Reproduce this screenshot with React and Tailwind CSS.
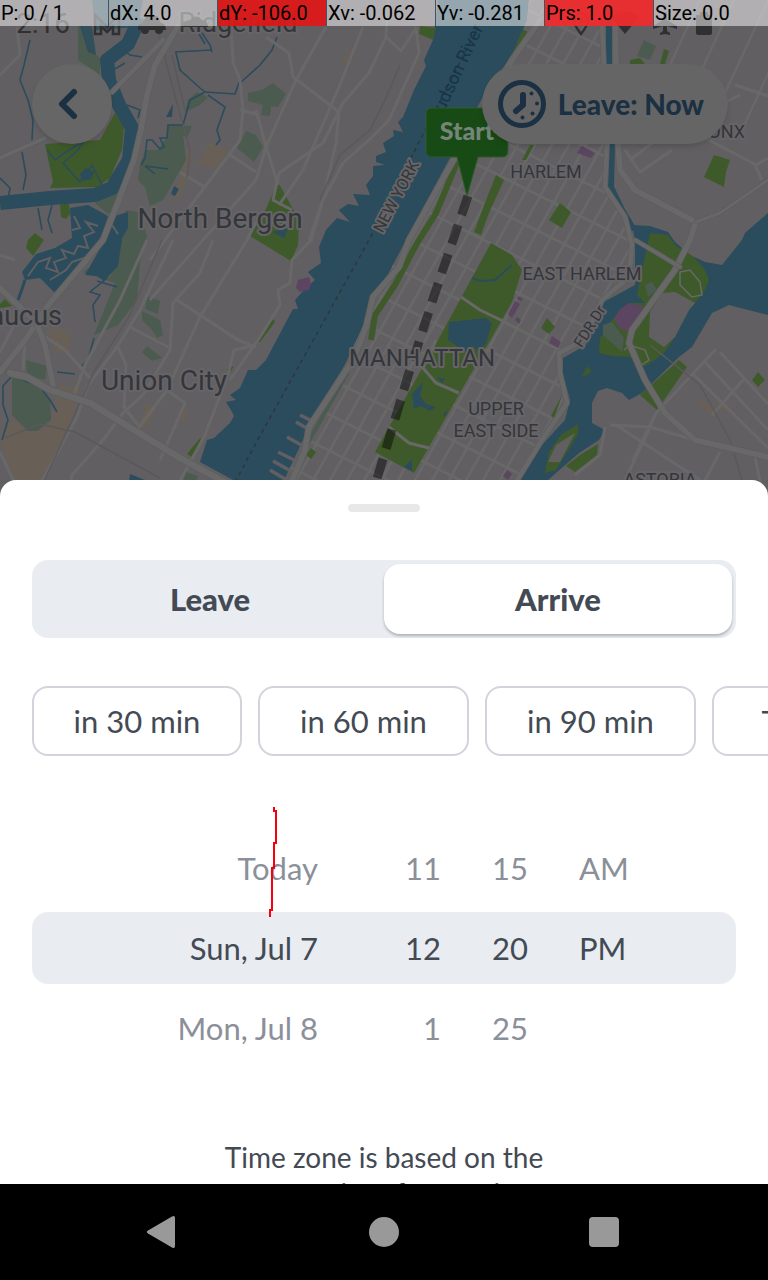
import React, { useState } from "react";

const LAND = "#625f62";
const WATER = "#2a4c5c";
const PARK = "#3f5a2a";
const MARSH = "#4b5b50";
const ROAD = "#696869";
const SAND = "#686056";
const PURPLE = "#5b4560";

const MANHATTAN =
  "M529 0 L527 20 L512 55 L483 97 L449 160 L406 240 L376 297 L346 363 L303 440 L275 500 L505 500 L542 440 L567 403 L560 373 L559 353 L584 340 L602 300 L632 277 L632 240 L607 190 L607 0 Z";

const avenues = Array.from({ length: 26 }, (_, i) => 420 + i * 17);
const streets = Array.from({ length: 20 }, (_, i) => -160 + i * 36);
const bronx = Array.from({ length: 7 }, (_, i) => i * 34);

const waterShapes = [
  "M438 0 L433 40 L424 60 L426 66 L414 90 L403 117 L398 122 L403 132 L393 130 L394 136 L383 143 L386 152 L376 156 L376 162 L385 165 L373 166 L373 176 L366 185 L370 195 L353 194 L359 206 L348 204 L339 210 L350 222 L337 218 L326 230 L319 247 L321 263 L308 272 L315 280 L306 288 L295 300 L298 309 L293 309 L266 360 L256 370 L248 370 L240 388 L230 395 L236 400 L226 402 L231 410 L234 416 L230 423 L214 438 L207 440 L200 462 L233 480 L240 500 L275 500 L303 440 L323 400 L346 363 L359 337 L376 297 L403 257 L406 240 L449 160 L483 97 L512 55 L519 43 L527 20 L529 0 Z",
  "M635 240 L635 285 L602 303 L586 345 L563 358 L563 375 L570 400 L565 420 L540 447 L505 500 L532 500 L548 480 L579 453 L599 440 L605 430 L592 423 L592 403 L598 391 L607 388 L622 393 L629 400 L642 393 L679 357 L692 347 L712 313 L729 305 L768 315 L768 213 L745 233 L742 240 L722 265 L705 262 L690 255 L675 242 L668 232 L650 226 L632 225 Z",
];

const parks = [
  "M491 243 L512 255 L522 270 L512 302 L503 318 L414 473 L375 452 L438 340 Z",
  "M45 144 L100 140 L115 113 L124 126 L122 150 L110 178 L98 187 L50 188 L53 182 Z",
  "M496 175 L504 180 L489 213 L481 235 L474 232 L486 200 Z",
  "M560 203 L571 212 L562 228 L549 220 Z",
  "M714 155 L730 160 L726 172 L724 187 L704 177 Z",
  "M547 318 L555 327 L549 334 L541 328 Z",
  "M758 372 L765 380 L758 387 L752 380 Z",
  "M679 360 L687 367 L657 410 L640 395 Z",
  "M278 182 L299 220 L298 245 L291 261 L250 236 L264 213 Z",
  "M60 204 L69 204 L70 214 L66 219 L61 217 Z",
  "M28 240 L35 233 L44 240 L33 256 L26 248 Z",
  "M420 26 L436 28 L433 40 L419 34 Z",
  "M0 304 L5 299 L12 306 L0 308 Z",
  "M200 438 L203 441 L192 457 L187 454 Z",
  "M227 369 L234 366 L228 376 Z",
  "M273 319 L275 322 L260 342 L255 342 Z",
  "M311 448 L316 452 L311 459 L306 455 Z",
  "M562 395 L559 404 L554 418 L551 416 Z",
  "M664 49 L669 51 L665 64 L660 64 Z",
  "M630 60 L640 58 L645 64 L630 64 Z",
  "M530 145 L534 145 L526 160 L522 160 Z",
];

const marshes = [
  "M168 125 L192 126 L187 138 L183 135 L186 160 L163 200 L150 206 L145 187 L138 180 L140 165 L145 150 L158 150 L166 138 Z",
  "M78 26 L82 26 L88 48 L100 58 L100 75 L78 60 Z",
  "M132 163 L128 185 L120 205 L108 214 L95 203 L115 190 Z",
  "M125 210 L138 212 L147 235 L140 262 L137 300 L118 325 L94 335 L115 283 L83 272 L88 268 L110 277 L120 255 L118 242 L128 228 Z",
  "M185 112 L188 100 L197 92 L208 97 L200 105 Z",
  "M248 93 L262 90 L273 83 L286 94 L278 107 L271 106 L270 116 L261 115 L263 105 L248 101 Z",
  "M237 148 L246 131 L256 135 L263 147 L254 162 Z",
  "M12 376 L35 384 L50 400 L51 420 L37 431 L28 431 L12 415 Z",
  "M26 360 L47 366 L45 380 L27 375 Z",
  "M147 296 L160 301 L158 314 L145 309 Z",
  "M142 311 L160 320 L163 335 L157 338 L152 330 L142 320 Z",
  "M147 346 L162 358 L152 361 L142 352 Z",
  "M644 40 L656 46 L650 60 L637 56 Z",
  "M534 26 L546 30 L544 37 L534 33 Z",
  "M550 33 L560 38 L557 45 L548 41 Z",
  "M595 284 L608 289 L600 297 L591 292 Z",
  "M186 472 L198 476 L192 490 L180 490 Z",
];

const sands = [
  "M210 142 L228 150 L218 168 L196 165 Z",
  "M48 331 L62 328 L71 338 L69 355 L55 352 Z",
  "M12 418 L28 431 L40 431 L52 420 L58 385 L80 388 L70 430 L40 490 L18 490 L0 440 Z",
  "M342 60 L355 45 L356 54 L344 68 Z",
  "M146 405 L157 404 L150 425 L138 430 Z",
  "M180 408 L188 412 L184 422 L177 420 Z",
  "M355 415 L367 422 L361 434 L350 428 Z",
  "M697 397 L715 408 L712 415 L698 404 Z",
  "M715 400 L730 405 L722 413 Z",
  "M190 145 L193 150 L183 190 L172 205 L185 160 Z",
];

const streams = [
  "M30 40 L24 65 L20 80 L28 100 L33 120 L32 140",
  "M22 152 L26 175 L23 190",
  "M0 178 L10 188 L8 200",
  "M175 52 L212 50 M176 53 L180 70 L200 88 L205 92",
  "M205 92 L190 100 L183 125",
  "M208 95 L225 107 L217 130 L220 140 L216 145",
  "M240 80 L235 94 L205 92",
  "M183 125 L168 125 L167 138 L160 138 L164 147 L160 149 L152 140 L147 140 L145 158 L141 165",
  "M145 166 L155 174 M145 166 L168 169",
  "M47 150 L55 160 L66 152 L84 141 L78 150 L63 163 L80 182 L86 174 L92 165 L102 185",
  "M38 208 L42 230 M52 205 L48 220 L52 233",
  "M108 73 L125 63 M118 46 L130 55 L142 57 M127 105 L140 110 L138 118",
  "M12 376 L3 386 L3 405 L8 420 L2 440 M13 376 L40 387 L50 400 L57 412",
  "M94 338 L88 360 L82 366 M57 372 L75 374",
  "M107 278 L90 292 L100 295 L93 305 L95 322 M97 281 L117 287",
  "M240 83 L260 65 L272 50 L277 37",
  "M200 30 L210 45 L212 52 M198 32 L205 44",
];

const mainRoads = [
  ["M178 26 L155 65 L147 95 L141 130 L134 160 L120 197 L103 240 L50 303 L25 340 L0 372", 7],
  ["M163 40 L112 92", 6],
  ["M0 158 L45 138", 5],
  ["M0 288 L36 322 L45 345 L53 385", 7],
  ["M10 373 L27 377 L50 390 L90 403 L180 458 L250 496", 8],
  ["M540 20 L512 60 L449 168 L409 240 L399 267 L373 297 L366 327 L353 360 L309 427 L305 450 L284 500", 7],
  ["M696 222 L690 240 L675 270 L632 330 L629 343 L645 380 L665 413 L695 440 L768 457", 7],
  ["M635 240 L662 256 L680 267", 5],
  ["M615 0 L617 130 L620 170 L635 190 L692 220", 7],
  ["M696 222 L720 213 L768 180", 4],
  ["M602 20 L607 143 L605 187 L625 217 L632 245 L629 277 L602 300 L584 340 L559 353 L560 373 L567 403 L542 440 L505 500", 6],
];

const roads = [
  "M147 240 L120 300 L85 365 L72 400 M173 240 L140 310 L117 347 L87 387 L77 417 L37 490",
  "M213 240 L200 273 L173 303 L170 350 L143 395 L123 413 L103 440 L72 475 L70 490",
  "M256 222 L247 240 L200 317 L167 390 L137 430",
  "M177 300 L238 340 L256 347 M130 327 L170 348",
  "M118 347 L126 365 L124 407 L138 425",
  "M167 390 L185 403 L160 460",
  "M256 345 L234 350 L228 375 L205 435 L175 490",
  "M326 27 L296 80 L266 147 L256 180 L150 300",
  "M363 27 L339 87 L303 170 L279 205",
  "M388 0 L386 37 L369 73 L343 103 L323 143 L279 173 L273 200 L292 210",
  "M266 37 L289 53 L293 77 L339 112 L336 143 L323 200 L309 240",
  "M386 37 L401 51 L416 28 L419 53 L389 120 L369 140 L343 163 L323 200 L311 240 L292 260 L290 283 L278 290 L280 305 L260 337 L230 380",
  "M231 26 L233 62 L240 80 L243 110 L240 140 L150 260",
  "M0 75 L20 55 L17 27 M240 110 L256 114",
  "M256 110 L267 150 L278 185 M180 172 L206 188 M230 155 L256 172",
  "M35 330 L65 350 L90 378 M25 340 L23 370 M0 352 L14 325",
  "M0 255 L15 260 M0 452 L18 490",
  "M716 349 L656 413 L633 460 M720 352 L768 404 M705 362 L768 430 M693 374 L768 448",
  "M745 378 L712 415 M610 425 L650 427 L695 440",
  "M605 427 L600 455 L575 475 M616 425 L700 480 M650 428 L620 490",
  "M755 457 L762 490 M720 452 L700 490",
  "M630 160 L672 128 L740 95 M630 75 L700 140 M735 85 L768 96",
  "M625 150 L640 172 L672 150 M690 130 L756 165 L768 158 M755 165 L762 180",
];

function MapLabel({ x, y, size, rotate, anchor = "middle", children }) {
  return (
    <text
      x={x}
      y={y}
      fontSize={size}
      textAnchor={anchor}
      transform={rotate ? `rotate(${rotate} ${x} ${y})` : undefined}
      fill="#33363b"
      stroke="#666466"
      strokeWidth="4"
      strokeLinejoin="round"
      paintOrder="stroke"
    >
      {children}
    </text>
  );
}

function CityMap() {
  return (
    <svg
      className="absolute inset-0 h-full w-full font-[Roboto,sans-serif]"
      viewBox="0 0 768 500"
      preserveAspectRatio="xMidYMin slice"
      aria-label="Map of Manhattan"
    >
      <defs>
        <clipPath id="island">
          <path d={MANHATTAN} />
        </clipPath>
      </defs>
      <rect width="768" height="500" fill={LAND} />
      {sands.map((d) => <path key={d} d={d} fill={SAND} />)}
      {marshes.map((d) => <path key={d} d={d} fill={MARSH} />)}

      <g stroke={ROAD} strokeWidth="2.4" fill="none">
        {bronx.map((v) => (
          <path key={v} d={`M${640 + v} 130 L${700 + v} 0`} />
        ))}
      </g>

      {waterShapes.map((d) => <path key={d} d={d} fill={WATER} />)}

      <g clipPath="url(#island)" fill="none">
        <rect width="768" height="500" fill={LAND} />
        <g stroke={ROAD} strokeWidth="2.6">
          {avenues.map((x) => <path key={x} d={`M${x + 60} 0 L${x - 220} 500`} />)}
          {streets.map((y) => <path key={y} d={`M260 ${y} L660 ${y + 200}`} />)}
        </g>
        <path d="M458 160 L436 213 L416 245 L395 285 L375 315 L371 340" stroke={PARK} strokeWidth="6" />
        <path d="M484 95 L497 67 L513 54 L524 30" stroke={PARK} strokeWidth="8" />
        <path d="M348 372 L332 400 L304 450" stroke={MARSH} strokeWidth="4" />
      </g>

      {parks.map((d) => <path key={d} d={d} fill={PARK} />)}

      <path
        d="M650 233 L641 275 L637 295 L645 303 L629 303 L612 320 L600 338 L599 353 L612 356 L630 357 L640 366 L646 366 L664 353 L675 337 L689 310 L695 303 L705 290 L709 280 L705 270 L694 257 L675 245 L668 235 Z"
        fill={PARK}
      />
      <path d="M662 293 L675 292 L695 303 L689 310 L675 337 L664 347 L649 337 L650 312 Z" fill={LAND} />
      <path d="M603 325 L612 322 L624 338 L622 352 L603 335 Z" fill={MARSH} />
      <path d="M645 285 L652 282 L657 290 L648 297 Z" fill={MARSH} />
      <path d="M680 272 L690 270 L700 282 L702 295 L692 297 L680 285 Z M624 350 L630 345 L645 350 L649 360 L640 366" fill="none" stroke={ROAD} strokeWidth="1.5" />
      <path d="M578 424 L578 434 L556 470 L545 473 L549 452 L562 434 Z" fill={PARK} />
      <path d="M575 433 L560 462 L548 462 L556 445 Z" fill={LAND} />
      <path d="M598 444 L597 455 L575 472 L566 466 L580 455 Z" fill={PARK} />
      <path d="M587 366 L591 371 L589 374 L582 377 Z" fill={PARK} />

      <g fill={PURPLE}>
        <path d="M614 318 L620 309 L629 303 L644 306 L629 332 L620 329 Z" />
        <path d="M298 280 L309 277 L311 284 L309 290 L300 292 L296 288 Z" />
        <path d="M582 146 L595 153 L591 158 L577 153 Z" />
        <path d="M515 301 L520 304 L512 318 L508 314 Z" />
        <path d="M518 296 L523 299 L521 301 L517 299 Z M517 317 L521 320 L519 324 L515 320 Z" />
        <path d="M552 336 L561 342 L558 348 L549 343 Z M507 470 L512 474 L508 480 L503 476 Z" />
      </g>

      <path d="M140 18 L128 44 L107 60 L109 80 L119 105 L132 128 L129 160 L112 188 L95 195 L50 198 L0 203" fill="none" stroke={WATER} strokeWidth="14" strokeLinejoin="round" />
      <path d="M92 0 L143 0 L138 27 L96 30 Z M80 26 L92 26 L96 55 L88 52 Z" fill={WATER} opacity="0.85" />
      <path d="M70 208 L88 205 L108 216 L101 238 L70 276 L55 293 L40 278 L25 280 L22 272 L36 254 L55 248 L72 238 Z" fill={WATER} />
      <path d="M85 275 L105 240 L122 240 L118 266 L104 281 L97 276 Z" fill={WATER} />
      <path d="M108 218 L128 212 L128 228 L120 242 L104 242 Z" fill={WATER} />
      <path d="M28 276 L38 262 L50 258 L46 268 L58 272 L54 262 L66 258 L62 250 L74 254 L78 246 L88 248 L84 236 L94 232 L86 222 L98 226 M74 216 L80 228 L72 230 M50 280 L66 270 L72 262 L84 258 M110 222 L118 234 M44 240 L60 243 L68 236" fill="none" stroke={LAND} strokeWidth="2" />
      <path d="M25 280 L21 292 L18 300" fill="none" stroke={WATER} strokeWidth="3" />
      <path d="M80 174 L86 168 L94 172 L92 179 L82 181 Z" fill={WATER} />
      <path d="M173 104 L172 117 L166 117 Z M174 186 L179 189 L175 196 L171 194 Z M130 474 L150 482 L150 490 L128 490 Z M272 232 L288 228 L284 238 Z" fill={WATER} />
      <g fill="none" stroke={WATER} strokeWidth="1.6">
        {streams.map((d) => <path key={d} d={d} />)}
      </g>
      <path d="M609 20 L609 63 L612 143 L611 187 L622 210 L634 230" fill="none" stroke={WATER} strokeWidth="6" />

      <path d="M449 322 L486 318 L492 323 L486 343 L479 352 L473 346 L466 352 L448 340 Z" fill={WATER} />
      <path d="M412 394 L423 382 L420 396 L426 404 L436 407 L430 411 L421 406 L414 409 Z M437 377 L445 379 L442 383 Z M443 414 L448 410 L445 417 Z M404 467 L412 459 L412 471 Z" fill={WATER} />
      <path d="M472 278 L480 281 L495 280 L512 265" fill="none" stroke={WATER} strokeWidth="2" />
      <path d="M461 297 L480 310 L503 321 M436 340 L423 368 L436 383 L459 393 M389 427 L409 443 L429 448" fill="none" stroke={ROAD} strokeWidth="3" />
      <path d="M300 415 L312 421 M296 422 L308 429 M287 437 L303 446 M278 452 L300 463 M273 461 L296 474 M270 470 L290 482" stroke={LAND} strokeWidth="3.5" />

      <g fill="none" stroke={ROAD} strokeWidth="3" strokeLinejoin="round">
        {roads.map((d) => <path key={d} d={d} />)}
      </g>
      <g fill="none" stroke="#5a585b" strokeWidth="1.5">
        <path d="M158 30 L172 85 L190 150 L187 178 M172 55 L185 110 M162 240 L130 315 L95 370 L40 490 M5 438 L40 424 L75 432 L160 478" />
        <path d="M650 345 L700 385 L730 440 L745 490 M400 65 L385 100 L370 130 L340 155 L320 200" />
      </g>
      <g fill="none" strokeLinejoin="round" strokeLinecap="round">
        {mainRoads.map(([d, w]) => (
          <g key={d}>
            <path d={d} stroke="#5d5d5f" strokeWidth={w} />
            <path d={d} stroke={ROAD} strokeWidth={w - 1.5} />
          </g>
        ))}
      </g>

      <path d="M478 27 L369 240 L256 443 L230 492" fill="none" stroke="#2e353b" strokeWidth="1.4" strokeDasharray="4 4" />
      <path d="M468 196 L434 296 L408 376 L376 482" fill="none" stroke="#000000" strokeOpacity="0.45" strokeWidth="9" strokeDasharray="20 10.7" />

      <MapLabel x={238} y={32} size={27}>Ridgefield</MapLabel>
      <MapLabel x={220} y={228} size={28}>North Bergen</MapLabel>
      <MapLabel x={62} y={325} size={27} anchor="end">Secaucus</MapLabel>
      <MapLabel x={164} y={390} size={28}>Union City</MapLabel>
      <MapLabel x={546} y={178} size={18}>HARLEM</MapLabel>
      <MapLabel x={582} y={280} size={18}>EAST HARLEM</MapLabel>
      <MapLabel x={422} y={366} size={24}>MANHATTAN</MapLabel>
      <MapLabel x={496} y={415} size={18}>UPPER</MapLabel>
      <MapLabel x={496} y={437} size={18}>EAST SIDE</MapLabel>
      <MapLabel x={660} y={486} size={18}>ASTORIA</MapLabel>
      <MapLabel x={745} y={138} size={18} anchor="end">BRONX</MapLabel>
      <MapLabel x={401} y={199} size={16} rotate={-62}>NEW YORK</MapLabel>
      <MapLabel x={594} y={329} size={15} rotate={-58}>FDR Dr</MapLabel>
      <text x="461" y="76" fontSize="18" textAnchor="middle" fill="#17344a" transform="rotate(-65 461 76)">
        Hudson River
      </text>

      <path d="M432 108 H502 Q508 108 508 114 V151 Q508 157 502 157 H478 L467 196 L457 157 H432 Q426 157 426 151 V114 Q426 108 432 108 Z" fill="#184a15" stroke="#2e5a2b" strokeWidth="1" />
      <text x="467" y="140" fontSize="25" fontWeight="900" textAnchor="middle" fill="#76857a" className="font-[Lato,sans-serif]">
        Start
      </text>
    </svg>
  );
}

function StatusBar() {
  return (
    <div className="flex h-10 items-end justify-between pr-14 pl-4 text-[#303032]">
      <div className="flex items-end gap-5">
        <span className="text-[28px] leading-8">2:16</span>
        <svg className="mb-1 h-6 w-32" viewBox="0 0 128 24" aria-hidden="true">
          <path d="M5 22 V3 L17 15 L29 3 V22 H23 V14 L17 20 L11 14 V22 Z" fill="none" stroke="currentColor" strokeWidth="2.5" />
          <path d="M48 18 V13 L52 11 L57 4 H67 L71 11 Q76 12 76 18 H73 A4 4 0 0 1 65 18 H59 A4 4 0 0 1 51 18 Z" fill="currentColor" />
          <path d="M92 14 Q94 8 100 8 Q106 1 112 8 Q118 9 118 15 H92 Z" fill="currentColor" />
        </svg>
      </div>
      <svg className="mb-1 h-6 w-36" viewBox="0 0 144 24" aria-hidden="true">
        <path d="M13 22 Q6 13 6 8 A7 7 0 0 1 20 8 Q20 13 13 22 Z" fill="none" stroke="currentColor" strokeWidth="2.5" />
        <circle cx="13" cy="8" r="2.5" fill="currentColor" />
        <path d="M57 22 L43 5 Q57 -6 71 5 Z" fill="currentColor" />
        <path d="M95 1 Q97 -1 99 1 V8 L109 14 V17 L99 14 V19 L102 21 V23 L97 22 L92 23 V21 L95 19 V14 L85 17 V14 L95 8 Z" fill="currentColor" />
        <path d="M128 3 H132 V0 H140 V3 H144 V21 Q144 23 142 23 H130 Q128 23 128 21 Z" fill="currentColor" />
      </svg>
    </div>
  );
}

const touchStats = [
  ["P: 0 / 1", "bg-white/50"],
  ["dX: 4.0", "bg-white/50"],
  ["dY: -106.0", "bg-[#dc1818]/95"],
  ["Xv: -0.062", "bg-white/50"],
  ["Yv: -0.281", "bg-white/50"],
  ["Prs: 1.0", "bg-[#ee2c2e]/95"],
  ["Size: 0.0", "bg-white/50"],
];

function PointerReadout() {
  return (
    <div className="absolute inset-x-0 top-0 grid grid-cols-[repeat(6,109fr)_114fr] font-[Roboto,sans-serif] text-xl text-black">
      {touchStats.map(([label, tone]) => (
        <span key={label} className={`h-[26px] overflow-hidden border-r border-[#3d5567] pl-px leading-[26px] whitespace-nowrap last:border-r-0 ${tone}`}>
          {label}
        </span>
      ))}
    </div>
  );
}

const rows = [
  ["Today", "11", "15", "AM"],
  ["Sun, Jul 7", "12", "20", "PM"],
  ["Mon, Jul 8", "1", "25", ""],
];

export default function App() {
  const [mode, setMode] = useState("Arrive");
  return (
    <div className="flex h-screen flex-col overflow-hidden bg-white font-[Lato,sans-serif] text-[#434a54]">
      <main className="relative flex min-h-0 flex-1 flex-col bg-[#625f62]">
        <section className="relative -mb-5 min-h-0 flex-1 overflow-hidden">
          <CityMap />
          <div className="relative font-[Roboto,sans-serif]">
            <StatusBar />
          </div>
          <PointerReadout />
          <div className="relative mt-6 flex justify-between pr-10 pl-8">
            <button aria-label="Back" className="flex size-20 items-center justify-center rounded-full bg-[#666666] shadow-md">
              <svg className="size-10" viewBox="0 0 40 40" aria-hidden="true">
                <path d="M22 8 L10 20 L22 32" fill="none" stroke="#1b3042" strokeWidth="6" strokeLinecap="round" strokeLinejoin="round" />
              </svg>
            </button>
            <button className="flex h-20 items-center gap-3 rounded-full bg-[#656565] pr-6 pl-4 text-[28px] font-black text-[#1b3042] shadow-md">
              <svg className="size-12" viewBox="0 0 48 48" aria-hidden="true">
                <circle cx="24" cy="24" r="21.5" fill="none" stroke="currentColor" strokeWidth="5" />
                <path d="M25 15 V25 L18 31" fill="none" stroke="currentColor" strokeWidth="6" strokeLinecap="round" strokeLinejoin="round" />
                <g fill="currentColor">
                  <circle cx="33.5" cy="13.5" r="2" />
                  <circle cx="39" cy="23.5" r="2" />
                  <circle cx="34.5" cy="33.5" r="2" />
                  <circle cx="24.5" cy="37.5" r="2" />
                </g>
              </svg>
              Leave: Now
            </button>
          </div>
        </section>

        <section className="relative h-[55vh] overflow-hidden rounded-t-2xl bg-white pt-6">
          <div className="mx-auto h-2 w-18 rounded-full bg-[#e8e8e8]" />

          <div className="mx-8 mt-12 flex rounded-2xl bg-[#e9ecf1] p-1">
            {["Leave", "Arrive"].map((name) => (
              <button
                key={name}
                aria-pressed={mode === name}
                onClick={() => setMode(name)}
                className={`h-[70px] flex-1 rounded-2xl text-[31px] font-black ${mode === name ? "bg-white shadow-[0_2px_3px_rgba(0,0,0,0.25)]" : ""}`}
              >
                {name}
              </button>
            ))}
          </div>

          <div className="mt-12 flex gap-4 overflow-hidden pl-8">
            {["in 30 min", "in 60 min", "in 90 min", "Tonight"].map((name) => (
              <button
                key={name}
                className="h-[70px] w-[211px] shrink-0 rounded-2xl border-2 border-[#d1d4dc] text-[31px] first:w-[210px] last:w-[200px]"
              >
                {name}
              </button>
            ))}
          </div>

          <div className="mx-8 mt-19 text-[31px]">
            {rows.map((row, i) => (
              <div
                key={row[0]}
                className={`grid h-[72px] grid-cols-[286fr_123fr_138fr_157fr] items-center rounded-2xl ${i === 1 ? "my-2 bg-[#e9ecf1]" : "text-[#8b8f99]"}`}
              >
                <span className="text-right">{row[0]}</span>
                <span className="text-right">{row[1]}</span>
                <span className="text-center">{row[2]}</span>
                <span>{row[3]}</span>
              </div>
            ))}
          </div>

          <p className="mx-auto mt-[75px] max-w-[340px] text-center text-[28px] leading-9">
            Time zone is based on the start point of your trip.
          </p>

          <svg className="pointer-events-none absolute top-[325px] left-[266px] h-28 w-4" viewBox="0 0 16 112" aria-hidden="true">
            <path d="M8 2 V6 H10 V38 H8 V63 H6 V105 H4 V112" fill="none" stroke="#f5000c" strokeWidth="2" />
          </svg>
        </section>
      </main>

      <nav className="grid h-24 shrink-0 grid-cols-[repeat(3,220px)] items-center justify-center justify-items-center bg-black text-[#999999]">
        <button aria-label="Back">
          <svg className="size-9" viewBox="0 0 36 36" aria-hidden="true">
            <path d="M2 16.5 L26 2.5 Q29 1 29 4 V32 Q29 35 26 33.5 L2 19.5 Q-0.500 18 2 16.5 Z" fill="currentColor" />
          </svg>
        </button>
        <button aria-label="Home" className="size-[30px] rounded-full bg-[#999999]" />
        <button aria-label="Recent apps" className="size-[30px] rounded-sm bg-[#999999]" />
      </nav>
    </div>
  );
}
